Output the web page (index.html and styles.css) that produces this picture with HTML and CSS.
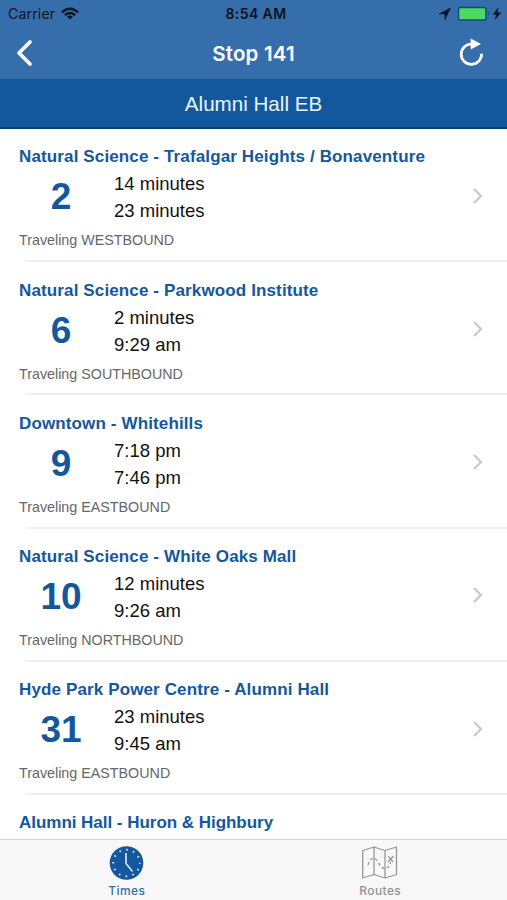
FILE: index.html
```
<!DOCTYPE html>
<html lang="en">
<head>
<meta charset="utf-8">
<title>Stop 141</title>
<link rel="stylesheet" href="styles.css">
</head>
<body>
<div class="app">
  <header class="top">
    <div class="status">
      <div class="status-left"><span class="carrier">Carrier</span>
        <svg class="wifi" width="18" height="14" viewBox="0 0 18 14" fill="none" stroke="#081421" stroke-width="2.3"><path d="M1 5.3Q9-1.7 17 5.3M3.9 8.2Q9 3.9 14.1 8.2"/><path d="M6.1 9.7Q9 7.5 11.9 9.7L9 12.6Z" fill="#081421" stroke="none"/></svg>
      </div>
      <span class="clock">8:54 AM</span>
      <div class="status-right">
        <svg width="63" height="16" viewBox="0 0 63 16"><path d="M11.5 2L.2 8H5.9V13.6Z" fill="#081421" stroke="#081421" stroke-width=".5"/><rect x="19.5" y="1.5" width="27.5" height="12.5" rx="2" fill="#4adb64" stroke="#17477e" stroke-width="1.5"/><path d="M49 5.5q2 2.2 0 4.5z" fill="#17477e"/><path d="M59 2L54.3 8.4H57.6L56.2 13.4L61.7 6.8H58.2Z" fill="#081421" stroke="#081421" stroke-width=".5"/></svg>
      </div>
    </div>
    <div class="nav">
      <svg class="back" width="18" height="28" viewBox="0 0 18 28" fill="none" stroke="#fff" stroke-width="3.7" stroke-linecap="round" stroke-linejoin="round"><path d="M15 3L4 14L15 25"/></svg>
      <h1>Stop 141</h1>
      <svg class="reload" width="26" height="28" viewBox="0 0 26 28"><path d="M12.5 5A10.2 10.2 0 1 0 22.6 14.8" fill="none" stroke="#fff" stroke-width="2.7"/><path d="M11.7 -.4L22 5.1L11.7 10.4Z" fill="#fff"/></svg>
    </div>
  </header>
  <div class="stop"><span>Alumni Hall EB</span></div>
  <main class="list">
    <section class="row"><h2>Natural Science - Trafalgar Heights / Bonaventure</h2><div class="info"><b>2</b><div class="times"><p>14 minutes</p><p>23 minutes</p></div><svg class="chev" viewBox="0 0 12 18"><path d="M2 2L9 9L2 16"/></svg></div><p class="dir">Traveling WESTBOUND</p></section>
    <section class="row"><h2>Natural Science - Parkwood Institute</h2><div class="info"><b>6</b><div class="times"><p>2 minutes</p><p>9:29 am</p></div><svg class="chev" viewBox="0 0 12 18"><path d="M2 2L9 9L2 16"/></svg></div><p class="dir">Traveling SOUTHBOUND</p></section>
    <section class="row"><h2>Downtown - Whitehills</h2><div class="info"><b>9</b><div class="times"><p>7:18 pm</p><p>7:46 pm</p></div><svg class="chev" viewBox="0 0 12 18"><path d="M2 2L9 9L2 16"/></svg></div><p class="dir">Traveling EASTBOUND</p></section>
    <section class="row"><h2>Natural Science - White Oaks Mall</h2><div class="info"><b>10</b><div class="times"><p>12 minutes</p><p>9:26 am</p></div><svg class="chev" viewBox="0 0 12 18"><path d="M2 2L9 9L2 16"/></svg></div><p class="dir">Traveling NORTHBOUND</p></section>
    <section class="row"><h2>Hyde Park Power Centre - Alumni Hall</h2><div class="info"><b>31</b><div class="times"><p>23 minutes</p><p>9:45 am</p></div><svg class="chev" viewBox="0 0 12 18"><path d="M2 2L9 9L2 16"/></svg></div><p class="dir">Traveling EASTBOUND</p></section>
    <section class="row"><h2 class="tight">Alumni Hall - Huron &amp; Highbury</h2></section>
  </main>
  <footer class="tabs">
    <div class="tab active">
      <svg width="36" height="36" viewBox="0 0 36 36"><circle cx="17.5" cy="18" r="16.8" fill="#13589d"/><circle cx="17.5" cy="18" r="13.3" fill="none" stroke="#d5e2ee" stroke-width="2" stroke-dasharray="1.6 5.364" stroke-dashoffset=".8"/><path d="M17 8V18.5L23.5 26.5" fill="none" stroke="#d5e2ee" stroke-width="1.7"/></svg>
      <span>Times</span>
    </div>
    <div class="tab">
      <svg width="36" height="36" viewBox="0 0 36 36" fill="none" stroke="#969696" stroke-width="1.3" stroke-linejoin="round"><path d="M.7 5.5L12 2L23 5.5L34.5 2V29.5L23 33L12 29.5L.7 33ZM12 2V29.5M23 5.5V33"/><path d="M6 20Q8.5 12 12.5 13.5C17.5 16 17.5 24 23.5 23.5Q28 22 28.5 17" stroke-dasharray="3 2.4"/><path d="M26.5 11.5L31 17M31.5 11L26 17"/></svg>
      <span>Routes</span>
    </div>
  </footer>
</div>
</body>
</html>
```
FILE: styles.css
```
* { box-sizing: border-box; margin: 0; padding: 0; }
body { background: #fff; font-family: "Liberation Sans", Arial, sans-serif; }
svg { display: block; flex: none; }
.app { width: 507px; height: 900px; display: flex; flex-direction: column; overflow: hidden; }
.top { flex: none; height: 79px; background: #366dab; }
.status { height: 27px; display: grid; grid-template-columns: 1fr auto 1fr; align-items: center; padding: 0 5px 0 8px; font-family: Inter, sans-serif; font-size: 14px; color: #081421; }
.status-left { display: flex; align-items: center; gap: 6px; }
.carrier { letter-spacing: .2px; }
.clock { font-weight: 600; letter-spacing: .4px; padding-left: 2px; }
.status-right { display: flex; justify-content: flex-end; }
.nav { height: 52px; display: grid; grid-template-columns: 1fr auto 1fr; align-items: center; padding: 0 22px 0 15px; }
h1 { font: 600 20.5px/51px Inter, sans-serif; letter-spacing: .2px; color: #fff; padding-left: 7px; }
.reload { justify-self: end; overflow: visible; }
.stop { flex: none; height: 50px; background: #13589d; border-bottom: 2px solid #103d6b; color: #eaf3fc; font-size: 20.6px; line-height: 50px; text-align: center; }
.list { flex: 1; min-height: 0; overflow: hidden; }
.row { height: 133.2px; padding: 17.4px 0 0 19px; background: linear-gradient(#f0f0f0, #f0f0f0) 25px 100% / 100% 2px no-repeat; }
.row h2 { font-size: 17px; line-height: 22px; letter-spacing: .13px; color: #13589d; white-space: nowrap; }
.row .tight { letter-spacing: -.03px; }
.info { height: 54px; margin-top: 2px; display: flex; align-items: center; }
.info b { width: 84px; text-align: center; font-size: 37px; line-height: 54px; color: #13589d; }
.times { flex: 1; margin-left: 11px; font-size: 18.5px; line-height: 27px; color: #111; }
.chev { width: 12px; height: 18px; margin: -3px 23.5px 0 0; fill: none; stroke: #c7c7cc; stroke-width: 2.2; }
.dir { font-size: 14.3px; line-height: 20px; margin-top: 6px; color: #666; }
.tabs { flex: none; height: 61px; display: flex; background: #f8f8f8; border-top: 1px solid #d4d4d4; }
.tab { flex: 1; padding-top: 5px; display: flex; flex-direction: column; align-items: center; font: 500 12px/18px Inter, sans-serif; letter-spacing: .4px; color: #929292; }
.tab svg { margin-bottom: 1px; }
.active { color: #366dab; }
```
